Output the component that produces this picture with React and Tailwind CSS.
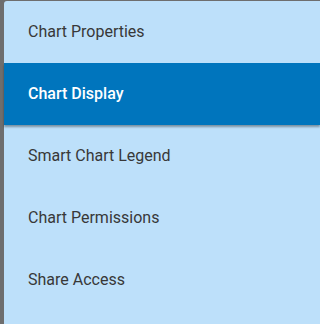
import React from "react";

const items = [
  "Chart Properties",
  "Chart Display",
  "Smart Chart Legend",
  "Chart Permissions",
  "Share Access",
];

export default function App() {
  return (
    <div className="w-full h-[324px] bg-[#6e6e6e] pl-[4px] pt-[1px] overflow-hidden" style={{ fontFamily: "Roboto, sans-serif" }}>
      <div className="h-full bg-[#bde0fa] rounded-tl-[3px] flex flex-col">
        {items.map((t, i) =>
          i === 1 ? (
            <div
              key={t}
              className="h-[62px] flex items-center pl-[24px] bg-[#0075bd] text-white font-medium text-[16px] shadow-[0_2px_2px_rgba(0,0,0,0.35)] relative z-10"
            >
              {t}
            </div>
          ) : (
            <div key={t} className="h-[62px] flex items-center pl-[24px] text-[#383838] text-[16px]">
              {t}
            </div>
          )
        )}
      </div>
    </div>
  );
}
